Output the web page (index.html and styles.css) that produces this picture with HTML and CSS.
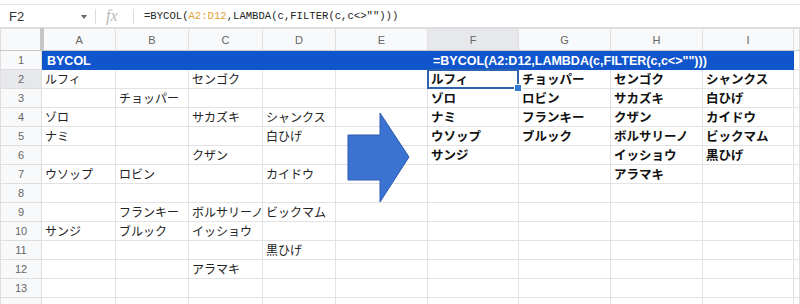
FILE: index.html
```html
<!doctype html>
<html>
<head>
<meta charset="utf-8">
<title>BYCOL</title>
<link rel="stylesheet" href="styles.css">
</head>
<body>
<div class="topline"></div>
<div class="fbar">
	<div class="namebox">F2<span class="caret"></span></div>
	<div class="sep"></div>
	<div class="fx">fx</div>
	<div class="sep"></div>
	<div class="formula">=BYCOL(<span class="ref">A2:D12</span>,LAMBDA(c,FILTER(c,c&lt;&gt;"")))</div>
</div>

<table class="sheet">
	<colgroup>
		<col class="w-rn"><col class="w-a"><col class="w-b"><col class="w-c"><col class="w-d">
		<col class="w-e"><col class="w-f"><col class="w-g"><col class="w-h"><col class="w-i"><col>
	</colgroup>
	<tr class="hdr">
		<th class="corner"></th><th>A</th><th>B</th><th>C</th><th>D</th><th>E</th><th class="on">F</th><th>G</th><th>H</th><th>I</th><th></th>
	</tr>
	<tr>
		<th>1</th><td class="blue" colspan="5">BYCOL</td><td class="blue" colspan="4">=BYCOL(A2:D12,LAMBDA(c,FILTER(c,c&lt;&gt;"")))</td><td></td>
	</tr>
	<tr>
		<th class="on">2</th><td>ルフィ</td><td></td><td>センゴク</td><td></td><td></td>
		<td class="res cur">ルフィ</td><td class="res">チョッパー</td><td class="res">センゴク</td><td class="res">シャンクス</td><td></td>
	</tr>
	<tr>
		<th>3</th><td></td><td>チョッパー</td><td></td><td></td><td></td>
		<td class="res">ゾロ</td><td class="res">ロビン</td><td class="res">サカズキ</td><td class="res">白ひげ</td><td></td>
	</tr>
	<tr>
		<th>4</th><td>ゾロ</td><td></td><td>サカズキ</td><td>シャンクス</td><td></td>
		<td class="res">ナミ</td><td class="res">フランキー</td><td class="res">クザン</td><td class="res">カイドウ</td><td></td>
	</tr>
	<tr>
		<th>5</th><td>ナミ</td><td></td><td></td><td>白ひげ</td><td></td>
		<td class="res">ウソップ</td><td class="res">ブルック</td><td class="res">ボルサリーノ</td><td class="res">ビックマム</td><td></td>
	</tr>
	<tr>
		<th>6</th><td></td><td></td><td>クザン</td><td></td><td></td>
		<td class="res">サンジ</td><td></td><td class="res">イッショウ</td><td class="res">黒ひげ</td><td></td>
	</tr>
	<tr>
		<th>7</th><td>ウソップ</td><td>ロビン</td><td></td><td>カイドウ</td><td></td>
		<td></td><td></td><td class="res">アラマキ</td><td></td><td></td>
	</tr>
	<tr>
		<th>8</th><td></td><td></td><td></td><td></td><td></td><td></td><td></td><td></td><td></td><td></td>
	</tr>
	<tr>
		<th>9</th><td></td><td>フランキー</td><td>ボルサリーノ</td><td>ビックマム</td><td></td><td></td><td></td><td></td><td></td><td></td>
	</tr>
	<tr>
		<th>10</th><td>サンジ</td><td>ブルック</td><td>イッショウ</td><td></td><td></td><td></td><td></td><td></td><td></td><td></td>
	</tr>
	<tr>
		<th>11</th><td></td><td></td><td></td><td>黒ひげ</td><td></td><td></td><td></td><td></td><td></td><td></td>
	</tr>
	<tr>
		<th>12</th><td></td><td></td><td>アラマキ</td><td></td><td></td><td></td><td></td><td></td><td></td><td></td>
	</tr>
	<tr>
		<th>13</th><td></td><td></td><td></td><td></td><td></td><td></td><td></td><td></td><td></td><td></td>
	</tr>
	<tr>
		<th></th><td></td><td></td><td></td><td></td><td></td><td></td><td></td><td></td><td></td><td></td>
	</tr>
</table>

<svg class="arrow" width="70" height="96" viewBox="0 0 70 96">
	<polygon points="1,23 33,23 33,1 62,45 33,90 33,68 1,68" fill="#3b73d3" stroke="#2d5cae" stroke-width="1"/>
</svg>
</body>
</html>
```

FILE: styles.css
```css
* { margin:0; padding:0; box-sizing:border-box; }
body { width:800px; height:304px; overflow:hidden; position:relative; background:#fff; font-family:"Liberation Sans","Noto Sans CJK JP",sans-serif; color:#222; }

.topline { height:5px; border-bottom:1px solid #e6e6e6; }
.fbar { height:23px; display:flex; align-items:center; border-bottom:1px solid #dadce0; }
.namebox { width:95px; height:100%; display:flex; align-items:center; padding-left:9px; font-size:13px; color:#333; position:relative; }
.caret { position:absolute; left:81px; top:10px; width:0; height:0; border-left:3px solid transparent; border-right:3px solid transparent; border-top:4px solid #666; }
.sep { width:1px; height:15px; background:#dcdcdc; }
.fx { width:37px; padding-left:10px; font-family:"Liberation Serif",serif; font-style:italic; font-size:16px; color:#b8b8b8; }
.formula { padding-left:10px; font-family:"Liberation Mono",monospace; font-size:10.6px; color:#222; white-space:nowrap; }
.ref { color:#e0a234; }

.sheet { width:800px; table-layout:fixed; border-collapse:collapse; }
.w-rn { width:41px; }
.w-a, .w-c { width:74px; }
.w-b, .w-d { width:73px; }
.w-e, .w-g, .w-h { width:92px; }
.w-f, .w-i { width:91px; }

.sheet th, .sheet td { height:19px; border:1px solid #e2e2e2; white-space:nowrap; overflow:hidden; }
.sheet th { background:#f8f9fa; color:#666; font-weight:normal; font-size:11px; text-align:center; border-color:#dfdfdf; }
.sheet .hdr th { height:22px; border-bottom-color:#c8c8c8; }
.sheet th.on { background:#e6e8eb; }
.sheet .corner { border-right:4px solid #c6c6c6; }

.sheet td { font-size:12px; line-height:12px; padding:0 3px 2px; vertical-align:bottom; }
.sheet td.blue { background:#1155cc; border-color:#1155cc; color:#fff; font-weight:bold; font-size:12.5px; padding-left:5px; }
.sheet td.res { font-weight:bold; font-size:12.5px; color:#111; }
.sheet td.cur { position:relative; overflow:visible; }
.sheet td.cur::after { content:""; position:absolute; left:-1px; top:-1px; right:-1px; bottom:-1px; border:2px solid #2e63ad; }
.sheet td.cur::before { content:""; position:absolute; right:-4px; bottom:-4px; width:6px; height:6px; background:#3079d6; border:1px solid #fff; z-index:1; }

.arrow { position:absolute; left:347px; top:112px; }
```
